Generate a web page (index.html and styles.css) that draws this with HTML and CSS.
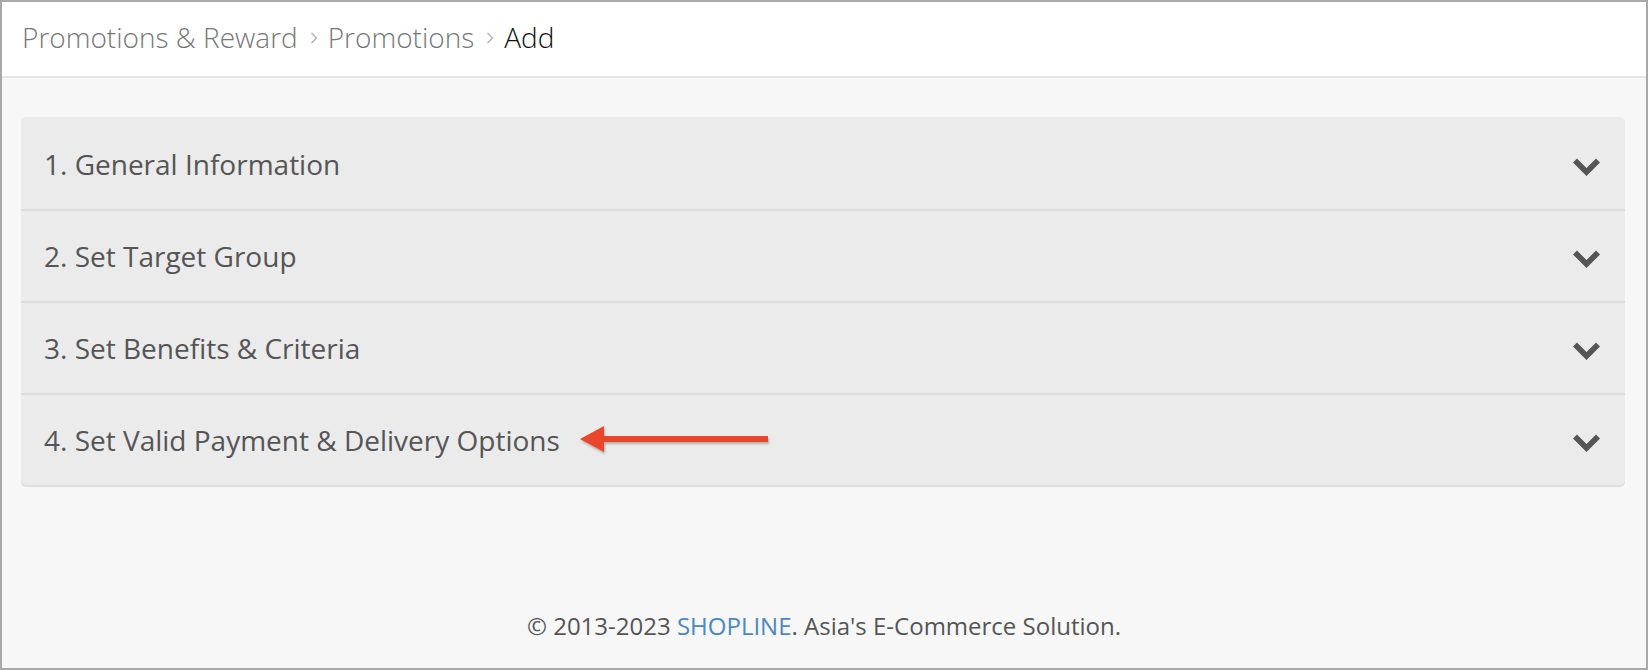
FILE: index.html
```html
<!DOCTYPE html>
<html lang="en">
<head>
  <meta charset="UTF-8" />
  <title>Promotions - Add</title>
  <link rel="stylesheet" href="styles.css">
</head>
<body>
  <div class="frame">
    <div class="breadcrumb">
      <a href="#">Promotions &amp; Reward</a>
      <svg class="sep" viewBox="0 0 8 12" width="8" height="12"><path d="M1.5 1 L6.5 6 L1.5 11" fill="none" stroke="#b4b9c4" stroke-width="1.6"/></svg>
      <a href="#">Promotions</a>
      <svg class="sep" viewBox="0 0 8 12" width="8" height="12"><path d="M1.5 1 L6.5 6 L1.5 11" fill="none" stroke="#b4b9c4" stroke-width="1.6"/></svg>
      <span class="current">Add</span>
    </div>

    <div class="content">
      <div class="panel">
        <div class="panel-row">
          <span class="panel-title">1. General Information</span>
          <svg class="chevron" viewBox="0 0 27 18" width="27" height="18"><polygon points="0,4.5 4,0.5 13.5,10 23,0.5 27,4.5 13.5,18" fill="#555"/></svg>
        </div>
        <div class="panel-row">
          <span class="panel-title">2. Set Target Group</span>
          <svg class="chevron" viewBox="0 0 27 18" width="27" height="18"><polygon points="0,4.5 4,0.5 13.5,10 23,0.5 27,4.5 13.5,18" fill="#555"/></svg>
        </div>
        <div class="panel-row">
          <span class="panel-title">3. Set Benefits &amp; Criteria</span>
          <svg class="chevron" viewBox="0 0 27 18" width="27" height="18"><polygon points="0,4.5 4,0.5 13.5,10 23,0.5 27,4.5 13.5,18" fill="#555"/></svg>
        </div>
        <div class="panel-row">
          <span class="panel-title">4. Set Valid Payment &amp; Delivery Options</span>
          <svg class="pointer" viewBox="0 0 192 30" width="192" height="30"><path d="M1 14 L25 1 L25 11 L189 11 L189 17 L25 17 L25 27 Z" fill="#e8472b"/></svg>
          <svg class="chevron" viewBox="0 0 27 18" width="27" height="18"><polygon points="0,4.5 4,0.5 13.5,10 23,0.5 27,4.5 13.5,18" fill="#555"/></svg>
        </div>
      </div>
    </div>

    <div class="footer">
      © 2013-2023 <a href="#">SHOPLINE</a>. Asia's E-Commerce Solution.
    </div>
  </div>
</body>
</html>
```

FILE: styles.css
```css
html, body {
  margin: 0;
  height: 100%;
}
body {
  font-family: "Open Sans", "Noto Sans", sans-serif;
  background: #f7f7f7;
}
.frame {
  box-sizing: border-box;
  height: 670px;
  border: 2px solid #a9a9a9;
  display: flex;
  flex-direction: column;
}
.breadcrumb {
  box-sizing: border-box;
  height: 76px;
  background: #fff;
  border-bottom: 2px solid #e4e4e4;
  display: flex;
  align-items: center;
  padding: 0 20px 5px;
  font-size: 28px;
  font-weight: 300;
}
.breadcrumb a {
  color: #777;
  text-decoration: none;
}
.breadcrumb .sep {
  margin: 2px 10px 0 12px;
}
.breadcrumb .current {
  color: #111;
}
.content {
  padding: 39px 21px 0 19px;
}
.panel {
  background: #ebebeb;
  border-top: 2px solid #ebebeb;
  border-radius: 5px;
  box-shadow: 0 2px 0 #dedede;
}
.panel-row {
  height: 90px;
  display: flex;
  align-items: center;
  padding: 0 25px 0 23px;
  border-bottom: 2px solid #dcdcdc;
}
.panel-row:last-child {
  border-bottom: none;
}
.panel-title {
  font-size: 28px;
  color: #555;
}
.pointer {
  margin-left: 19px;
  filter: drop-shadow(1px 2px 1px rgba(0, 0, 0, 0.25));
}
.chevron {
  margin-left: auto;
  margin-top: 5px;
}
.footer {
  margin-top: auto;
  padding-bottom: 26px;
  text-align: center;
  font-size: 24px;
  color: #555;
}
.footer a {
  color: #4a87c6;
  text-decoration: none;
}
```
